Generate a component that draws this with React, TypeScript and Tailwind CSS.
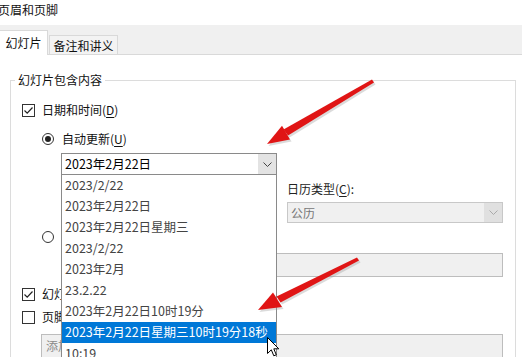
import type { ReactNode } from 'react';

const listItems = [
  '2023/2/22',
  '2023年2月22日',
  '2023年2月22日星期三',
  '2023/2/22',
  '2023年2月',
  '23.2.22',
  '2023年2月22日10时19分',
  '2023年2月22日星期三10时19分18秒',
  '10:19',
];

function CheckBox({ checked }: { checked?: boolean }) {
  return (
    <span className="flex h-[13px] w-[13px] shrink-0 items-center justify-center border border-[#333] bg-white">
      {checked && (
        <svg width="11" height="11" viewBox="0 0 11 11" fill="none">
          <path d="M1.5 5.5 L4.2 8.2 L9.5 2.5" stroke="#222" strokeWidth="1.2" />
        </svg>
      )}
    </span>
  );
}

function Radio({ checked }: { checked?: boolean }) {
  return (
    <span className="flex h-[12px] w-[12px] shrink-0 items-center justify-center rounded-full border border-[#333] bg-white">
      {checked && <span className="h-[6px] w-[6px] rounded-full bg-[#222]" />}
    </span>
  );
}

function Chevron({ color = '#444' }: { color?: string }) {
  return (
    <svg width="9" height="5" viewBox="0 0 9 5" fill="none">
      <path d="M0.5 0.5 L4.5 4.5 L8.5 0.5" stroke={color} strokeWidth="1" />
    </svg>
  );
}

function Key({ children }: { children: ReactNode }) {
  return <span className="underline underline-offset-2">{children}</span>;
}

function Arrows() {
  return (
    <svg className="pointer-events-none absolute left-0 top-0" width="522" height="357" viewBox="0 0 522 357">
      <g fill="#9a9a9a" opacity="0.35" transform="translate(1.5 2)">
        <polygon points="372,79.5 374,82.5 288,135.5 283.5,129.5" />
        <polygon points="267,144 282,125.8 290,139.6" />
        <polygon points="357,257.5 359,260.5 280.5,302.5 276.5,296.5" />
        <polygon points="258,310 273,292.5 282,307" />
      </g>
      <g fill="#e01515">
        <polygon points="372,79.5 374,82.5 288,135.5 283.5,129.5" />
        <polygon points="267,144 282,125.8 290,139.6" />
        <polygon points="357,257.5 359,260.5 280.5,302.5 276.5,296.5" />
        <polygon points="258,310 273,292.5 282,307" />
      </g>
    </svg>
  );
}

function Cursor() {
  return (
    <svg className="pointer-events-none absolute left-[267px] top-[337px]" width="13" height="21" viewBox="0 0 13 21">
      <path d="M0.5 0.5 L0.5 16.5 L4.3 12.8 L6.8 18.8 L9.3 17.8 L6.8 11.8 L11.8 11.8 Z" fill="#fff" stroke="#000" strokeWidth="1" strokeLinejoin="round" />
    </svg>
  );
}

export default function App() {
  return (
    <div className="relative h-[357px] w-[522px] overflow-hidden bg-white text-[12px] text-[#111] font-['Noto_Sans_CJK_SC','Liberation_Sans',sans-serif]">
      <div className="ml-[-2px] flex h-[25px] items-start pt-[3px] leading-[14px]">页眉和页脚</div>

      <div className="flex h-[30px] items-end border-b border-[#d9d9d9] bg-[#f0f0f0]">
        <div className="relative z-10 mb-[-1px] flex h-[25px] w-[48px] items-center justify-center border border-b-0 border-l-0 border-[#d9d9d9] bg-white pb-[1px]">幻灯片</div>
        <div className="ml-[1px] flex h-[19px] w-[69px] items-center justify-center border border-b-0 border-[#d9d9d9] bg-[#f3f3f3] pt-[1px]">备注和讲义</div>
      </div>

      <div className="relative ml-[10px] mt-[25px] h-[300px] w-[506px] border border-[#dcdcdc] pl-[11px]">
        <div className="absolute left-[4px] top-[-9px] bg-white px-[3px] leading-[16px]">幻灯片包含内容</div>

        <div className="mt-[21px] flex h-[16px] items-center gap-[7px]">
          <CheckBox checked />
          <span>日期和时间(<Key>D</Key>)</span>
        </div>

        <div className="ml-[20px] mt-[13px] flex h-[16px] items-center gap-[8px]">
          <Radio checked />
          <span>自动更新(<Key>U</Key>)</span>
        </div>

        <div className="ml-[39px] mt-[6px] flex h-[22px] w-[216px] border border-[#8a8a8a] bg-white">
          <span className="flex flex-1 items-center pl-[3px] text-[12.5px] text-[#000]">2023年2月22日</span>
          <span className="flex w-[18px] items-center justify-center bg-[#e3e3e3]">
            <Chevron />
          </span>
        </div>

        <div className="ml-[265px] mt-[6px] flex h-[16px] items-center text-[#222]">
          日历类型(<Key>C</Key>):
        </div>
        <div className="ml-[265px] mt-[5px] flex h-[21px] w-[216px] border border-[#c8c8c8] bg-[#f0f0f0]">
          <span className="flex flex-1 items-center pl-[3px] text-[#777]">公历</span>
          <span className="flex w-[18px] items-center justify-center bg-[#e0e0e0]">
            <Chevron color="#aaa" />
          </span>
        </div>

        <div className="ml-[20px] mt-[6px] flex h-[16px] items-center gap-[8px]">
          <Radio />
          <span>固定(<Key>X</Key>)</span>
        </div>

        <div className="ml-[39px] mt-[8px] h-[24px] w-[442px] border border-[#bdbdbd] bg-[#f0f0f0]" />

        <div className="mt-[9px] flex h-[16px] items-center gap-[7px]">
          <CheckBox checked />
          <span>幻灯片编号(<Key>N</Key>)</span>
        </div>

        <div className="mt-[7px] flex h-[16px] items-center gap-[7px]">
          <CheckBox />
          <span>页脚(<Key>F</Key>)</span>
        </div>

        <div className="ml-[19px] mt-[9px] flex h-[24px] w-[462px] items-center border border-[#bdbdbd] bg-[#f0f0f0] pl-[4px] text-[#8a8a8a]">
          添加页脚文本
        </div>
      </div>

      <div className="absolute left-[61px] top-[174px] w-[216px] border border-[#8a8a8a] bg-white">
        {listItems.map((item, i) => (
          <div
            key={`${item}-${i}`}
            className={`flex h-[21px] items-center pl-[3px] text-[12.5px] ${i === 7 ? 'bg-[#0078d7] text-white' : 'text-[#444]'}`}
          >
            {item}
          </div>
        ))}
      </div>

      <Arrows />
      <Cursor />
    </div>
  );
}
